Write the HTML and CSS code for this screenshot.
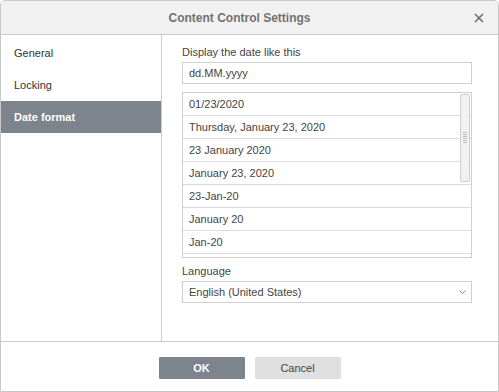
FILE: index.html
```html
<!DOCTYPE html>
<html lang="en">
<head>
    <meta charset="UTF-8">
    <title>Content Control Settings</title>
    <link rel="stylesheet" href="styles.css">
</head>
<body>
    <div class="dialog">
        <div class="header">
            <span class="title">Content Control Settings</span>
            <svg class="close" width="10" height="10" viewBox="0 0 10 10">
                <path d="M1 1 L9 9 M9 1 L1 9" stroke="#6f6f6f" stroke-width="1.6" fill="none"/>
            </svg>
        </div>
        <div class="main">
            <div class="nav">
                <div class="nav-item">General</div>
                <div class="nav-item">Locking</div>
                <div class="nav-item active">Date format</div>
            </div>
            <div class="content">
                <div class="label">Display the date like this</div>
                <div class="input">dd.MM.yyyy</div>
                <div class="list">
                    <div class="row">01/23/2020</div>
                    <div class="row">Thursday, January 23, 2020</div>
                    <div class="row">23 January 2020</div>
                    <div class="row">January 23, 2020</div>
                    <div class="row">23-Jan-20</div>
                    <div class="row">January 20</div>
                    <div class="row">Jan-20</div>
                    <div class="thumb"></div>
                </div>
                <div class="label">Language</div>
                <div class="input select">
                    <span>English (United States)</span>
                    <svg class="chevron" width="7" height="4" viewBox="0 0 7 4">
                        <path d="M0.5 0.5 L3.5 3.5 L6.5 0.5" stroke="#8a8a8a" stroke-width="1" fill="none"/>
                    </svg>
                </div>
            </div>
        </div>
        <div class="footer">
            <button class="btn primary">OK</button>
            <button class="btn">Cancel</button>
        </div>
    </div>
</body>
</html>
```

FILE: styles.css
```css
body {
    margin: 0;
    background: #fff;
    font-family: "Liberation Sans", Arial, sans-serif;
    font-size: 11px;
    color: #444;
}
.dialog {
    width: 499px;
    height: 392px;
    box-sizing: border-box;
    border: 1px solid #c8c8c8;
    border-radius: 5px 5px 0 0;
    display: flex;
    flex-direction: column;
    overflow: hidden;
}
.header {
    height: 33px;
    background: #f1f1f1;
    border-bottom: 1px solid #cbcbcb;
    display: flex;
    align-items: center;
    justify-content: center;
    padding-right: 20px;
    position: relative;
}
.title {
    font-size: 12px;
    font-weight: bold;
    color: #717171;
}
.close {
    position: absolute; /* sits over the header bar */
    right: 14px;
    top: 12px;
}
.main {
    height: 306px;
    display: flex;
    border-bottom: 1px solid #cbcbcb;
}
.nav {
    width: 160px;
    border-right: 1px solid #cbcbcb;
    padding-top: 2px;
}
.nav-item {
    height: 32px;
    line-height: 32px;
    padding-left: 13px;
    color: #333;
}
.nav-item.active {
    background: #7d848b;
    color: #fff;
    font-weight: bold;
}
.content {
    padding: 10px 0 0 20px;
    width: 290px;
}
.label {
    height: 15px;
    line-height: 15px;
    margin-bottom: 2px;
}
.input {
    height: 20px;
    line-height: 20px;
    border: 1px solid #cfcfcf;
    padding: 0 6px;
    margin-bottom: 8px;
}
.list {
    height: 164px;
    border: 1px solid #cfcfcf;
    overflow: hidden;
    position: relative;
    margin-bottom: 6px;
}
.row {
    height: 22px;
    line-height: 22px;
    padding-left: 6px;
    border-bottom: 1px solid #dcdcdc;
}
.thumb {
    position: absolute; /* scrollbar drawn over the rows */
    right: 1px;
    top: 1px;
    width: 8px;
    height: 86px;
    background: #f1f1f1;
    border: 1px solid #cfcfcf;
    border-radius: 2px;
}
.thumb::after {
    content: "";
    position: absolute;
    left: 2px;
    top: 37px;
    width: 4px;
    height: 12px;
    background: repeating-linear-gradient(#bdbdbd 0 1px, transparent 1px 2px);
}
.select {
    display: flex;
    align-items: center;
    justify-content: space-between;
    padding-right: 5px;
}
.footer {
    flex: 1;
    display: flex;
    justify-content: center;
    align-items: flex-start;
    gap: 10px;
    padding-top: 15px;
}
.btn {
    width: 86px;
    height: 22px;
    border: none;
    border-radius: 1px;
    background: #dfe0e2;
    color: #444;
    font-family: "Liberation Sans", Arial, sans-serif;
    font-size: 11px;
    padding: 0;
}
.btn.primary {
    background: #7d848b;
    color: #fff;
    font-weight: bold;
}
```
